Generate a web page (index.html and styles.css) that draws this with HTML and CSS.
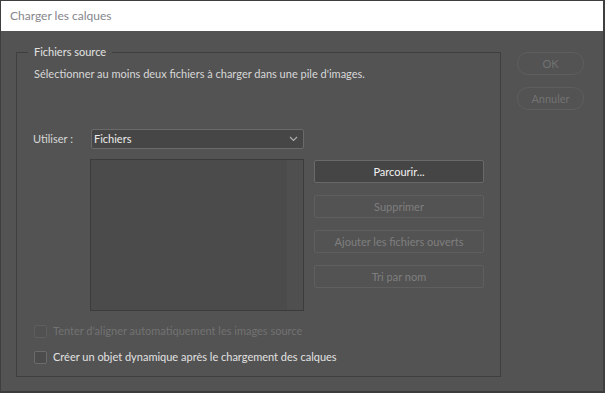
FILE: index.html
```html
<!DOCTYPE html>
<html lang="fr">
<head>
<meta charset="utf-8">
<title>Charger les calques</title>
<link rel="stylesheet" href="styles.css">
</head>
<body>
<div class="window">
  <div class="titlebar">Charger les calques</div>
  <div class="content">
    <fieldset class="group">
      <legend class="legend">Fichiers source</legend>
      <p class="desc">Sélectionner au moins deux fichiers à charger dans une pile d'images.</p>
      <div class="grid">
        <span class="label">Utiliser :</span>
        <div class="select">
          <span>Fichiers</span>
          <svg class="chev" width="9" height="6" viewBox="0 0 9 6"><path d="M1 1 L4.5 4.5 L8 1" fill="none" stroke="#b0b0b0" stroke-width="1.1"/></svg>
        </div>
        <span></span>
        <div class="list"><div class="track"></div></div>
        <div class="buttons">
          <div class="btn primary">Parcourir...</div>
          <div class="btn disabled">Supprimer</div>
          <div class="btn disabled">Ajouter les fichiers ouverts</div>
          <div class="btn disabled">Tri par nom</div>
        </div>
      </div>
      <div class="checks">
        <label class="check disabled"><span class="box"></span>Tenter d'aligner automatiquement les images source</label>
        <label class="check"><span class="box"></span>Créer un objet dynamique après le chargement des calques</label>
      </div>
    </fieldset>
    <div class="side">
      <div class="pill">OK</div>
      <div class="pill">Annuler</div>
    </div>
  </div>
</div>
</body>
</html>
```
FILE: styles.css
```css
* { box-sizing: border-box; }
html, body { margin: 0; padding: 0; }
body {
  width: 605px;
  height: 393px;
  overflow: hidden;
  font-family: Lato, "Noto Sans", sans-serif;
  font-size: 11px;
  background: #535353;
}
.window {
  width: 605px;
  height: 393px;
  border: 1px solid #3e3e3e;
  border-right: 2px solid #3f3f3f;
  border-bottom: 2px solid #3c3c3c;
  background: #535353;
  display: flex;
  flex-direction: column;
}
.titlebar {
  height: 30px;
  background: #ffffff;
  color: #85858b;
  padding-left: 9px;
  line-height: 30px;
  font-size: 12px;
  flex: none;
}
.content {
  display: flex;
  padding: 13px 0 0 15px;
  gap: 16px;
}
.group {
  margin: 0;
  width: 485px;
  height: 333px;
  border: 1px solid #3f3f3f;
  padding: 0 0 0 16px;
}
.legend {
  margin-left: -5px;
  padding: 0 6px;
  line-height: 16px;
  color: #e2e2e2;
}
.desc {
  margin: 6px 0 0 1px;
  line-height: 16px;
  color: #d8d8d8;
}
.grid {
  display: grid;
  grid-template-columns: 47px 214px 170px;
  column-gap: 10px;
  margin-top: 47px;
}
.grid > .label,
.grid > .select { margin-bottom: 10px; }
.label {
  color: #d8d8d8;
  line-height: 20px;
}
.select {
  grid-column: 2 / 4;
  width: 213px;
  height: 20px;
  margin-left: 1px;
  background: #464646;
  border: 1px solid #6a6a6a;
  border-radius: 2px;
  color: #ececec;
  display: flex;
  align-items: center;
  justify-content: space-between;
  padding: 0 5px 0 2px;
  line-height: 18px;
}
.chev { flex: none; }
.list {
  height: 152px;
  background: #4b4b4b;
  border: 1px solid #3c3c3c;
  display: flex;
  justify-content: flex-end;
}
.track {
  width: 16px;
  background: #4f4f4f;
}
.buttons {
  display: flex;
  flex-direction: column;
  gap: 12px;
  padding-top: 1px;
}
.btn {
  height: 23px;
  border: 1px solid #5f5f5f;
  border-radius: 2px;
  text-align: center;
  line-height: 21px;
  color: #7f7f7f;
}
.btn.primary {
  background: #454545;
  border-color: #696969;
  color: #f2f2f2;
}
.checks {
  display: flex;
  flex-direction: column;
  gap: 10px;
  margin-top: 12px;
}
.check {
  display: flex;
  align-items: center;
  gap: 6px;
  line-height: 16px;
  color: #e2e2e2;
  padding-left: 1px;
}
.check.disabled { color: #727272; }
.box {
  width: 13px;
  height: 13px;
  border: 1px solid #6b6b6b;
  border-radius: 2px;
  background: #4c4c4c;
  flex: none;
}
.check.disabled .box {
  border-color: #5f5f5f;
  background: #515151;
}
.side {
  display: flex;
  flex-direction: column;
  gap: 12px;
  padding-top: 8px;
}
.pill {
  width: 67px;
  height: 23px;
  border: 1px solid #5e5e5e;
  border-radius: 11px;
  text-align: center;
  line-height: 21px;
  color: #727272;
}
```
